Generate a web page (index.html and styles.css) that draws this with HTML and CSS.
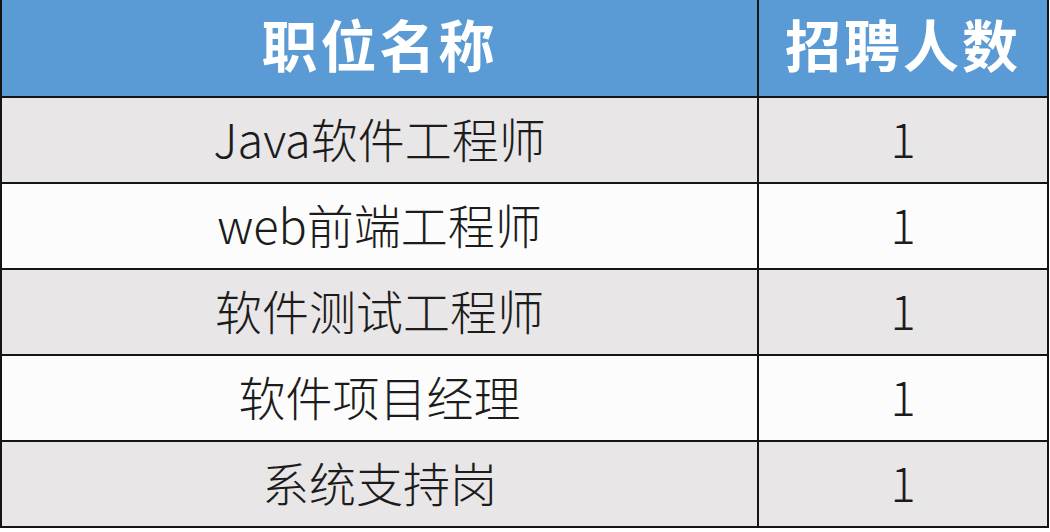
FILE: index.html
```html
<!DOCTYPE html>
<html lang="zh-CN">
<head>
<meta charset="utf-8">
<title>招聘职位</title>
<link rel="stylesheet" href="styles.css">
</head>
<body>
<div class="table">
  <div class="cell head">职位名称</div>
  <div class="cell head">招聘人数</div>
  <div class="cell odd">Java软件工程师</div>
  <div class="cell odd">1</div>
  <div class="cell even">web前端工程师</div>
  <div class="cell even">1</div>
  <div class="cell odd">软件测试工程师</div>
  <div class="cell odd">1</div>
  <div class="cell even">软件项目经理</div>
  <div class="cell even">1</div>
  <div class="cell odd">系统支持岗</div>
  <div class="cell odd">1</div>
</div>
</body>
</html>
```
FILE: styles.css
```css
html, body {
  margin: 0;
  padding: 0;
  background: #ffffff;
}
.table {
  width: 1049px;
  height: 528px;
  box-sizing: border-box;
  display: grid;
  grid-template-columns: 755px 288px;
  grid-template-rows: 96px repeat(5, 84px);
  gap: 2px;
  padding: 0 2px 2px 2px;
  background: #141414;
  font-family: "Noto Sans CJK SC", "Noto Sans", sans-serif;
}
.cell {
  display: flex;
  align-items: center;
  justify-content: center;
  box-sizing: border-box;
  padding-bottom: 5px;
  color: #1c1c1c;
  font-size: 47px;
  font-weight: 300;
  line-height: 1;
}
.head {
  background: #5b9bd5;
  color: #ffffff;
  font-size: 56px;
  font-weight: 700;
  letter-spacing: 3px;
  padding-bottom: 10px;
}
.odd {
  background: #e8e6e6;
}
.even {
  background: #fdfcfc;
}
```
